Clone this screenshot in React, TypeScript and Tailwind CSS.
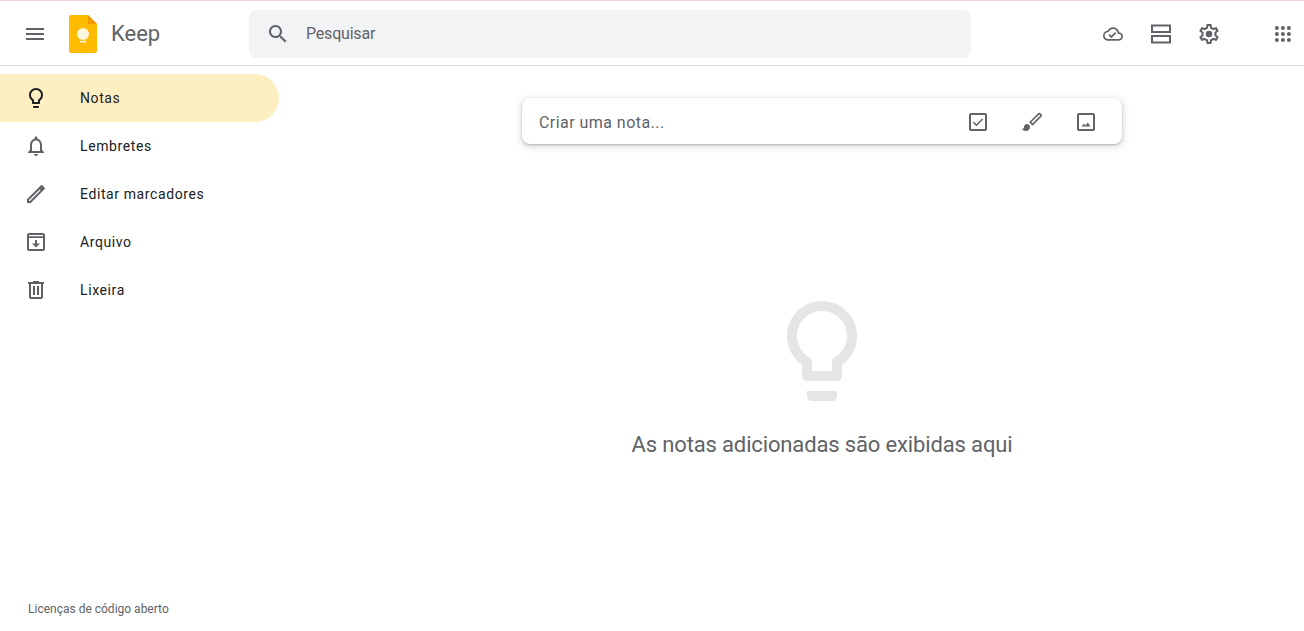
import React from "react";

const Ico = ({ d, size = 24, className = "fill-[#5f6368]" }: { d: string; size?: number; className?: string }) => (
  <svg width={size} height={size} viewBox="0 0 24 24" className={className}>
    <path d={d} fillRule="evenodd" />
  </svg>
);

const P = {
  menu: "M3 18h18v-2H3v2zm0-5h18v-2H3v2zm0-7v2h18V6H3z",
  search:
    "M15.5 14h-.79l-.28-.27C15.41 12.59 16 11.11 16 9.5 16 5.91 13.09 3 9.5 3S3 5.91 3 9.5 5.91 16 9.5 16c1.61 0 3.09-.59 4.23-1.57l.27.28v.79l5 4.99L20.49 19l-4.99-5zm-6 0C7.01 14 5 11.99 5 9.5S7.01 5 9.5 5 14 7.01 14 9.5 11.99 14 9.5 14z",
  cloud:
    "M19.35 10.04C18.67 6.59 15.64 4 12 4 9.11 4 6.6 5.64 5.35 8.04 2.34 8.36 0 10.91 0 14c0 3.31 2.69 6 6 6h13c2.76 0 5-2.24 5-5 0-2.64-2.05-4.78-4.65-4.96zM19 18H6c-2.21 0-4-1.79-4-4 0-2.05 1.53-3.76 3.56-3.97l1.07-.11.5-.95C8.08 7.14 9.94 6 12 6c2.62 0 4.88 1.86 5.39 4.43l.3 1.5 1.53.11c1.56.1 2.78 1.41 2.78 2.96 0 1.65-1.35 3-3 3zm-9-3.82l-2.09-2.09L6.5 13.5 10 17l6.01-6.01-1.41-1.41z",
  gear:
    "M19.43 12.98c.04-.32.07-.64.07-.98 0-.34-.03-.66-.07-.98l2.11-1.65c.19-.15.24-.42.12-.64l-2-3.46c-.09-.16-.26-.25-.44-.25-.06 0-.12.01-.17.03l-2.49 1c-.52-.4-1.08-.73-1.69-.98l-.38-2.65C14.46 2.18 14.25 2 14 2h-4c-.25 0-.46.18-.49.42l-.38 2.65c-.61.25-1.17.59-1.69.98l-2.49-1c-.06-.02-.12-.03-.18-.03-.17 0-.34.09-.43.25l-2 3.46c-.13.22-.07.49.12.64l2.11 1.65c-.04.32-.07.65-.07.98 0 .33.03.66.07.98l-2.11 1.65c-.19.15-.24.42-.12.64l2 3.46c.09.16.26.25.44.25.06 0 .12-.01.17-.03l2.49-1c.52.4 1.08.73 1.69.98l.38 2.65c.03.24.24.42.49.42h4c.25 0 .46-.18.49-.42l.38-2.65c.61-.25 1.17-.59 1.69-.98l2.49 1c.06.02.12.03.18.03.17 0 .34-.09.43-.25l2-3.46c.12-.22.07-.49-.12-.64l-2.11-1.65zm-1.98-1.71c.04.31.05.52.05.73 0 .21-.02.43-.05.73l-.14 1.13.89.7 1.08.84-.7 1.21-1.27-.51-1.04-.42-.9.68c-.43.32-.84.56-1.25.73l-1.06.43-.16 1.13-.2 1.35h-1.4l-.19-1.35-.16-1.13-1.06-.43c-.43-.18-.83-.41-1.23-.71l-.91-.7-1.06.43-1.27.51-.7-1.21 1.08-.84.89-.7-.14-1.13c-.03-.31-.05-.54-.05-.74s.02-.43.05-.73l.14-1.13-.89-.7-1.08-.84.7-1.21 1.27.51 1.04.42.9-.68c.43-.32.84-.56 1.25-.73l1.06-.43.16-1.13.2-1.35h1.39l.19 1.35.16 1.13 1.06.43c.43.18.83.41 1.23.71l.91.7 1.06-.43 1.27-.51.7 1.21-1.07.85-.89.7.14 1.13z M12 8.7a3.3 3.3 0 1 1 0 6.6 3.3 3.3 0 0 1 0-6.6z",
  bulb:
    "M9 21c0 .55.45 1 1 1h4c.55 0 1-.45 1-1v-1H9v1zm3-19C8.14 2 5 5.14 5 9c0 2.38 1.19 4.47 3 5.74V17c0 .55.45 1 1 1h6c.55 0 1-.45 1-1v-2.26c1.81-1.27 3-3.36 3-5.74 0-3.86-3.14-7-7-7zm2.85 11.1l-.85.6V16h-4v-2.3l-.85-.6C7.8 12.16 7 10.63 7 9c0-2.76 2.24-5 5-5s5 2.24 5 5c0 1.63-.8 3.16-2.15 4.1z",
  bell:
    "M12 22c1.1 0 2-.9 2-2h-4c0 1.1.9 2 2 2zm6-6v-5c0-3.07-1.63-5.64-4.5-6.32V4c0-.83-.67-1.5-1.5-1.5s-1.5.67-1.5 1.5v.68C7.64 5.36 6 7.92 6 11v5l-2 2v1h16v-1l-2-2zm-2 1H8v-6c0-2.48 1.51-4.5 4-4.5s4 2.02 4 4.5v6z",
  pencil:
    "M3 17.25V21h3.75L20.71 7.04c.39-.39.39-1.02 0-1.41l-2.34-2.34c-.39-.39-1.02-.39-1.41 0L3 17.25zM5 19v-.92L15.7 7.38l.92.92L5.92 19H5z",
  archive:
    "M19 3H5c-1.1 0-2 .9-2 2v14c0 1.1.9 2 2 2h14c1.1 0 2-.9 2-2V5c0-1.1-.9-2-2-2zM5 5h14v1.3H5V5zM5 19V8h14v11H5zM12 17.5l4-4h-3V10h-2v3.5H8l4 4z",
  trash:
    "M15 4V3H9v1H4v2h1v13c0 1.1.9 2 2 2h10c1.1 0 2-.9 2-2V6h1V4h-5zm2 15H7V6h10v13zM9 8h2v9H9zm4 0h2v9h-2z",
  brushHead: "M7 14c-1.66 0-3 1.34-3 3 0 1.31-1.16 2-2 2 .92 1.22 2.49 2 4 2 2.21 0 4-1.79 4-4 0-1.66-1.34-3-3-3z",
};

const nav = [
  { label: "Notas", icon: P.bulb, active: true },
  { label: "Lembretes", icon: P.bell },
  { label: "Editar marcadores", icon: P.pencil },
  { label: "Arquivo", icon: P.archive },
  { label: "Lixeira", icon: P.trash },
];

function KeepLogo() {
  return (
    <svg width="28" height="38" viewBox="0 0 28 38">
      <path d="M2 0h17l9 9v27a2 2 0 0 1-2 2H2a2 2 0 0 1-2-2V2a2 2 0 0 1 2-2z" fill="#ffbb00" />
      <path d="M19 0l9 9h-9z" fill="#f29900" />
      <circle cx="14" cy="19" r="6" fill="#fff7dd" />
      <rect x="11" y="25.8" width="6" height="1.7" fill="#fff7dd" />
    </svg>
  );
}

function Apps() {
  const dots = [3, 9, 15];
  return (
    <svg width="24" height="24" viewBox="0 0 24 24" className="fill-[#5f6368]">
      {dots.flatMap((y) =>
        dots.map((x) => <circle key={`${x}-${y}`} cx={x + 2.9} cy={y + 2.9} r="2" />)
      )}
    </svg>
  );
}

function ViewAgenda() {
  return (
    <svg width="24" height="24" viewBox="0 0 24 24" className="fill-[#5f6368]">
      <path d="M2 2.5h20v8.5H2zM4 4.5v4.5h16V4.5zM2 13h20v8.5H2zM4 15v4.5h16V15z" fillRule="evenodd" />
    </svg>
  );
}

function CheckBoxIcon() {
  return (
    <svg width="24" height="24" viewBox="0 0 24 24" fill="none" stroke="#5f6368">
      <rect x="4" y="4" width="16" height="16" rx="1" strokeWidth="2" />
      <path d="M7.3 12.2l3.1 3.1 6.2-6.4" strokeWidth="1.5" />
    </svg>
  );
}

function BrushIcon() {
  return (
    <svg width="24" height="24" viewBox="0 0 24 24" fill="none">
      <path d={P.brushHead} fill="#5f6368" />
      <path
        d="M10.2 12.3L18.6 3.9a.9.9 0 0 1 1.3 0l1 1a.9.9 0 0 1 0 1.3l-8.4 8.4z"
        stroke="#5f6368"
        strokeWidth="1.6"
      />
    </svg>
  );
}

function ImageIcon() {
  return (
    <svg width="24" height="24" viewBox="0 0 24 24" fill="none">
      <rect x="4" y="4" width="16" height="16" rx="1" stroke="#5f6368" strokeWidth="2" />
      <path d="M7.5 16.5l2.4-2.8 1.6 1.7 2.2-2.9 3 4z" fill="#5f6368" />
    </svg>
  );
}

export default function App() {
  return (
    <div className="flex h-[631px] w-full flex-col overflow-hidden bg-white font-['Roboto',sans-serif] text-[#202124]">
      <div className="h-px bg-[#ecd5da]" />
      <header className="flex h-[65px] items-center border-b border-[#dadce0] pl-[23px] pt-px">
        <Ico d={P.menu} />
        <div className="ml-[22px] flex">
          <KeepLogo />
        </div>
        <span className="ml-[14px] w-[138px] text-[22px] leading-7 text-[#5f6368]">Keep</span>
        <div className="flex h-12 w-[722px] items-center rounded-lg bg-[#f1f3f4] pl-[17px]">
          <Ico d={P.search} />
          <span className="ml-4 text-base tracking-[-0.2px] text-[#5f6368]">Pesquisar</span>
        </div>
        <div className="flex-1" />
        <div className="flex items-center">
          <div className="flex w-12 justify-center">
            <Ico d={P.cloud} size={20} />
          </div>
          <div className="flex w-12 justify-center">
            <ViewAgenda />
          </div>
          <div className="flex w-12 justify-center">
            <Ico d={P.gear} />
          </div>
          <div className="ml-[38px] mr-[9px] flex">
            <Apps />
          </div>
        </div>
      </header>
      <div className="flex min-h-0 flex-1">
        <aside className="flex w-[280px] shrink-0 flex-col pt-2">
          {nav.map((n) => (
            <div
              key={n.label}
              className={`flex h-12 w-[279px] items-center rounded-r-[24px] pl-6 ${n.active ? "bg-[#feefc3]" : ""}`}
            >
              <Ico d={n.icon} className={n.active ? "fill-[#202124]" : "fill-[#5f6368]"} />
              <span className="ml-8 text-sm font-normal tracking-[0.6px] text-[#202124]">{n.label}</span>
            </div>
          ))}
          <div className="mt-auto pb-[14px] pl-7 text-xs leading-4 text-[#5f6368]">Licenças de código aberto</div>
        </aside>
        <main className="flex flex-1 flex-col items-center pl-[60px] pt-8">
          <div className="flex h-[46px] w-[600px] items-center rounded-lg bg-white pl-[17px] pr-6 shadow-[0_1px_2px_0_rgba(60,64,67,0.3),0_2px_6px_2px_rgba(60,64,67,0.15)]">
            <span className="flex-1 pt-1 text-base tracking-[0.45px] text-[#5f6368]">Criar uma nota...</span>
            <div className="flex gap-[30px] pt-px">
              <CheckBoxIcon />
              <BrushIcon />
              <ImageIcon />
            </div>
          </div>
          <div className="mt-[147px] flex">
            <Ico d={P.bulb} size={120} className="fill-[#e5e5e5]" />
          </div>
          <p className="mt-5 text-[22px] leading-7 tracking-[-0.14px] text-[#5f6368]">As notas adicionadas são exibidas aqui</p>
        </main>
      </div>
    </div>
  );
}
